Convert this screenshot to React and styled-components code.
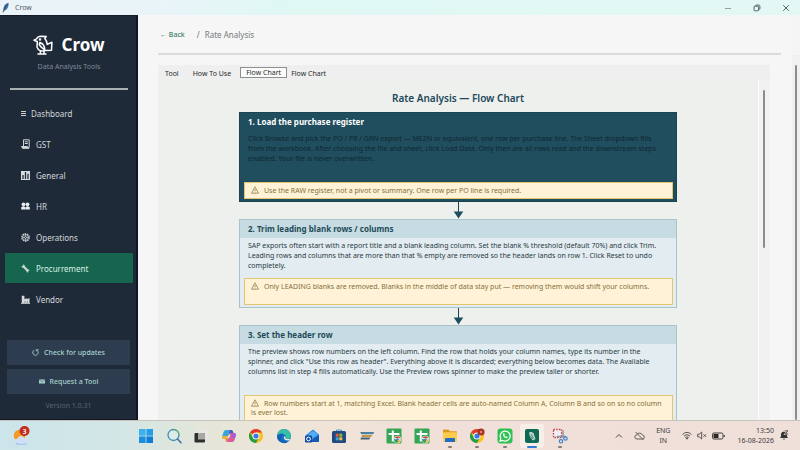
import React from 'react';
import styled, { createGlobalStyle, css } from 'styled-components';

const GlobalStyle = createGlobalStyle`
    * {
        box-sizing: border-box;
    }

    body {
        margin: 0;
        background: #f5f5f5;
        font-family: 'Noto Sans', 'Open Sans', sans-serif;
    }

    button {
        font-family: inherit;
        border: none;
        cursor: pointer;
    }

    svg {
        display: block;
        flex-shrink: 0;
    }
`;

const Desktop = styled.div`
    display: grid;
    grid-template-rows: auto minmax(0, 1fr) auto;
    height: 100vh;
    overflow: hidden;
`;

/* ---------- title bar ---------- */

const TitleBar = styled.header`
    display: flex;
    align-items: center;
    justify-content: space-between;
    height: 15px;
    padding: 0 9px 0 2px;
    background: linear-gradient(90deg, #eaf4f8 0%, #e9f4f8 20%, #dff8f4 36%, #e3f8f5 100%);
`;

const WindowTitle = styled.div`
    display: flex;
    align-items: center;
    gap: 5px;
    font-size: 7px;
    color: #4e5a60;
`;

const WindowControls = styled.div`
    display: flex;
    gap: 19px;
`;

const WindowButton = styled.button`
    display: flex;
    align-items: center;
    justify-content: center;
    width: 10px;
    height: 14px;
    padding: 0;
    background: transparent;
    color: #45545a;
`;

/* ---------- sidebar ---------- */

const Workspace = styled.div`
    display: grid;
    grid-template-columns: 138px minmax(0, 1fr) auto;
    min-height: 0;
`;

const Sidebar = styled.aside`
    display: flex;
    flex-direction: column;
    background: #1f2a38;
    border-top: 1px solid #131c28;
    border-right: 2px solid #101626;
    border-bottom: 1px solid #101626;
`;

const Brand = styled.div`
    display: flex;
    flex-direction: column;
    align-items: center;
    margin: 0 8px 0 10px;
    padding-top: 17px;
    border-bottom: 2px solid #a9b2b2;
    height: 74px;
`;

const BrandName = styled.div`
    display: flex;
    align-items: center;
    gap: 8px;
    font-size: 17px;
    line-height: 24px;
    font-weight: 700;
    color: #ffffff;
`;

const BrandTagline = styled.div`
    margin-top: 5px;
    font-size: 7px;
    line-height: 10px;
    color: #7d8b99;
`;

const Nav = styled.nav`
    display: flex;
    flex-direction: column;
    gap: 1px;
    padding: 8px 3px 0 5px;
`;

const NavItem = styled.a`
    display: flex;
    align-items: center;
    gap: ${({ $compact }) => ($compact ? 4 : 6)}px;
    height: 30px;
    padding-left: ${({ $compact }) => ($compact ? 15 : 16)}px;
    font-size: 8px;
    text-decoration: none;
    color: ${({ $active }) => ($active ? '#d9efe5' : '#d2d8dc')};
    background: ${({ $active }) => ($active ? '#16654e' : 'transparent')};
`;

const SidebarFooter = styled.div`
    display: flex;
    flex-direction: column;
    gap: 4px;
    margin-top: auto;
    padding: 0 6px 8px 7px;
`;

const SidebarButton = styled.button`
    display: flex;
    align-items: center;
    justify-content: center;
    gap: 5px;
    height: 25px;
    padding: 0;
    font-size: 7px;
    font-weight: 500;
    color: #a8d4cf;
    background: #2d3c4e;
`;

const Version = styled.div`
    margin-top: 3px;
    font-size: 7px;
    line-height: 10px;
    text-align: center;
    color: #586472;
`;

/* ---------- main area ---------- */

const Main = styled.main`
    display: flex;
    flex-direction: column;
    min-height: 0;
    padding: 13px 11px 0 20px;
    background: #f6f6f6;
`;

const Breadcrumb = styled.div`
    display: flex;
    align-items: center;
    height: 12px;
    padding-left: 2px;
    gap: 12px;
    font-size: 8px;
    color: #75797b;
`;

const BackLink = styled.a`
    font-size: 7px;
    font-weight: 500;
    text-decoration: none;
    color: #3c8169;
`;

const Crumb = styled.span`
    display: flex;
    gap: 5px;
`;

const Rule = styled.hr`
    width: 100%;
    height: 2px;
    margin: 13px 0 10px;
    border: none;
    background: #dadbdb;
    flex-shrink: 0;
`;

const Notebook = styled.section`
    display: flex;
    flex-direction: column;
    flex: 1;
    min-height: 0;
    margin-right: 11px;
    background: #efefef;
`;

const TabList = styled.div`
    display: flex;
    align-items: center;
    height: 14px;
    padding-left: 7px;
`;

const Tab = styled.button`
    height: 11px;
    margin-top: 3px;
    padding: 0;
    margin-right: ${({ $gap }) => $gap || 0}px;
    font-size: 7px;
    line-height: 10px;
    color: #262a2c;
    background: transparent;

    ${({ $active }) =>
        $active &&
        css`
            margin-top: 0;
            margin-right: 4px;
            padding: 0 5px;
            line-height: 9px;
            background: #fbfbfb;
            border: 1px solid #8b8f90;
        `}
`;

const TabPanel = styled.div`
    display: flex;
    flex: 1;
    min-height: 0;
`;

const Canvas = styled.div`
    display: flex;
    flex-direction: column;
    align-items: center;
    flex: 1;
    min-width: 0;
    overflow: hidden;
    border-right: 1px solid #fcfcfa;
    background: #edf0ed;
`;

const ScrollTrack = styled.div`
    display: flex;
    flex-direction: column;
    width: ${({ $outer }) => ($outer ? 8 : 11)}px;
    margin-top: ${({ $outer }) => ($outer ? 40 : 0)}px;
    padding: ${({ $outer }) => ($outer ? '10px 3px 0' : '11px 5px 0 4px')};
    background: ${({ $outer }) => ($outer ? '#f0f0f0' : '#f1f1f1')};
`;

const ScrollThumb = styled.div`
    width: 2px;
    height: ${({ $size }) => $size};
    border-radius: 1px;
    background: #8c8c8c;
`;

/* ---------- flow chart ---------- */

const ChartTitle = styled.h1`
    margin: 12px 0 7px;
    font-size: 10px;
    line-height: 14px;
    font-weight: 600;
    color: #21485a;
`;

const Step = styled.article`
    display: flex;
    flex-direction: column;
    flex-shrink: 0;
    width: 73%;
    padding-bottom: 2px;
    border: 1px solid ${({ $active }) => ($active ? '#1b4453' : '#a9c3ca')};
    background: ${({ $active }) => ($active ? '#204e5e' : '#e2ecf1')};
`;

const StepTitle = styled.h2`
    margin: 0;
    padding: 0 8px;
    font-size: 8px;
    line-height: 18px;
    font-weight: 700;
    color: ${({ $active }) => ($active ? '#ffffff' : '#1f4a59')};
    background: ${({ $active }) => ($active ? 'transparent' : '#c6dce2')};
`;

const StepText = styled.p`
    margin: 0;
    min-height: ${({ $roomy }) => ($roomy ? 51 : 40)}px;
    padding: 3px 8px 0;
    font-size: 7px;
    line-height: 10px;
    white-space: pre-line;
    color: ${({ $active }) => ($active ? '#0f2731' : '#2a3b43')};
`;

const Warning = styled.div`
    min-height: ${({ $short }) => ($short ? 17 : 27)}px;
    margin: 0 3px 0 4px;
    padding: 3px 6px 0;
    font-size: 7px;
    line-height: 9px;
    white-space: pre-line;
    color: #84713a;
    border: 1px solid #e2c672;
    background: #fff2d6;

    svg {
        display: inline-block;
        margin-right: 5px;
        vertical-align: -1px;
    }
`;

const Connector = styled.div`
    display: flex;
    justify-content: center;
    flex-shrink: 0;
    height: 17px;
`;

/* ---------- taskbar ---------- */

const Taskbar = styled.footer`
    display: grid;
    grid-template-columns: 138px 430px minmax(0, 1fr);
    align-items: center;
    height: 30px;
    border-top: 1px solid #c9c3be;
    background: linear-gradient(90deg, #cbe5ea 0%, #d3e6e6 15%, #e6e6d8 27%, #f0e4d8 40%, #f1dfd9 60%, #f0e0da 100%);
`;

const WeatherButton = styled.button`
    justify-self: start;
    margin-left: 12px;
    padding: 0;
    background: transparent;
`;

const PinnedApps = styled.div`
    display: flex;
    justify-content: space-between;
`;

const AppButton = styled.button`
    display: flex;
    flex-direction: column;
    align-items: center;
    width: 16px;
    height: 24px;
    padding: 4px 0 0;
    background: transparent;

    ${({ $focused }) =>
        $focused &&
        css`
            width: 24px;
            margin: 0 -4px;
            border-radius: 3px;
            background: #f8eee8;
        `}

    &::after {
        content: '';
        width: ${({ $focused }) => ($focused ? 10 : 4)}px;
        height: ${({ $running, $focused }) => ($running || $focused ? 2 : 0)}px;
        margin-top: 2px;
        border-radius: 1px;
        background: ${({ $focused }) => ($focused ? '#2b7cd3' : '#857d7a')};
    }
`;

const Tray = styled.div`
    display: flex;
    align-items: center;
    justify-content: flex-end;
    gap: 5px;
    padding-right: 11px;
    font-size: 7px;
    line-height: 10px;
    color: #3f3d3d;
`;

const TrayGroup = styled.div`
    display: flex;
    align-items: center;
    gap: ${({ $gap }) => $gap || 5}px;
    margin-right: 7px;
`;

const Language = styled.div`
    text-align: center;
`;

const Clock = styled.time`
    text-align: right;
`;

/* ---------- icons ---------- */

const CrowLogo = () => (
    <svg width="20" height="20" viewBox="0 0 20 20" fill="none" stroke="#fff" strokeWidth="1.5" strokeLinejoin="round" strokeLinecap="round">
        <path d="M1 5.200 3.500 3.800C4.500 2 6 1.200 8 1.200L13.200 1.500 11.800 3.500C13.300 5 14 7 14.200 9.400L18.900 7.200 18.500 15.200 11.500 15.600C8.500 16.500 5.200 15.500 4.200 12.500 3.600 10.500 4.600 9.200 4.200 6.500Z" />
        <path d="M6.800 7.500C10 8.500 11.600 11 11.800 14.800L8.200 12.200 6.300 9.500Z" />
        <path d="M7.400 16v2.300M11 16v2.300M5 18.900h4M10 18.900h3" />
        <circle cx="7" cy="4.600" r=".5" fill="#fff" />
    </svg>
);

const FeatherIcon = () => (
    <svg width="8" height="11" viewBox="0 0 8 11">
        <path d="M1.500 8.500C1 5.500 2.500 1.500 6.500.7 7 4 5.500 7.500 2.500 8.600Z" fill="#3f76a8" />
        <path d="M1 10.500C2 7 3.500 4 5.500 2" stroke="#23364a" strokeWidth=".8" fill="none" />
    </svg>
);

const MenuIcon = () => (
    <svg width="7" height="7" viewBox="0 0 7 7" stroke="#c9d0d6" strokeWidth="1">
        <path d="M1 1.500h5M1 3.500h5M1 5.500h5" />
    </svg>
);

const ReceiptIcon = () => (
    <svg width="9" height="10" viewBox="0 0 9 10" fill="none" stroke="#cfd6da" strokeWidth="1">
        <path d="M2.500 7V.8h5.700v7.700M3.800 2.800h3M3.800 4.500h3" />
        <path d="M.5 7.500h6v1.200H8V9.300H1.500Z" fill="#cfd6da" />
    </svg>
);

const ChartIcon = () => (
    <svg width="9" height="9" viewBox="0 0 9 9">
        <rect width="9" height="9" fill="#d7dde0" />
        <path d="M2 8V4M4.500 8V1M7 8V2.800" stroke="#1f2a38" strokeWidth="1.300" />
    </svg>
);

const PeopleIcon = () => (
    <svg width="9" height="8" viewBox="0 0 9 8" fill="#e9edef">
        <circle cx="2.500" cy="2.300" r="1.900" />
        <circle cx="6.500" cy="2.300" r="1.900" />
        <path d="M.2 7.500V5.200Q2.500 3.400 4.400 5.200V7.500ZM4.600 7.500V5.200Q6.500 3.400 8.800 5.200V7.500Z" />
    </svg>
);

const GearIcon = () => (
    <svg width="9" height="9" viewBox="0 0 9 9" fill="none" stroke="#ccd3d8">
        <circle cx="4.500" cy="4.500" r="3.700" strokeWidth="1.200" strokeDasharray="1.600 .7" />
        <circle cx="4.500" cy="4.500" r="2.900" strokeWidth=".8" />
        <circle cx="4.500" cy="4.500" r="1" strokeWidth=".9" />
        <path d="M4.500 1.500v2M4.500 5.500v2M1.500 4.500h2M5.500 4.500h2" strokeWidth=".7" />
    </svg>
);

const WrenchIcon = () => (
    <svg width="9" height="9" viewBox="0 0 9 9">
        <path d="M2 2 7 7" stroke="#c3d6cd" strokeWidth="2.400" />
        <path d="M.3 2.200 1.300 3.700 3.500 3.300 3.600 1.300 2.200.3 2 1.800ZM8.700 6.700 7.400 5.600 5.600 6 5.600 7.900 7 8.800 7.200 7.200Z" fill="#c3d6cd" />
    </svg>
);

const FactoryIcon = () => (
    <svg width="9" height="9" viewBox="0 0 9 9">
        <path d="M.8 8V.8H3.400V4.200L5.600 3V4.200L8.500 3V8Z" fill="#d5dadd" />
        <path d="M4 8V6.200M6.300 8V6.200" stroke="#6f7984" strokeWidth=".9" />
        <path d="M0 8.300h9" stroke="#d5dadd" />
    </svg>
);

const RefreshIcon = () => (
    <svg width="7" height="7" viewBox="0 0 7 7" fill="none" stroke="#a8cccb" strokeWidth=".9">
        <path d="M2.300 1.100A2.700 2.700 0 1 0 5 1.300M4.300 2.300V.7H6.600" />
    </svg>
);

const MailIcon = () => (
    <svg width="6" height="5" viewBox="0 0 6 5">
        <path d="M0 .5h6v4H0Z" fill="#a5cfca" />
        <path d="M0 .8 3 2.800 6 .8" fill="none" stroke="#4a6870" strokeWidth=".6" />
    </svg>
);

const WarningIcon = () => (
    <svg width="8" height="8" viewBox="0 0 8 8" fill="none" stroke="#84713a" strokeWidth=".7" strokeLinejoin="round">
        <path d="M4 .8 7.500 7.200H.5Z" />
        <path d="M4 3v2M4 5.700v.8" />
    </svg>
);

const ArrowDown = () => (
    <svg width="11" height="17" viewBox="0 0 11 17">
        <path d="M5.500 0v10" stroke="#1d4452" strokeWidth="1" />
        <path d="M.7 9.500h9.600L5.500 16.500Z" fill="#1b4f5e" />
    </svg>
);

const MinimizeIcon = () => (
    <svg width="8" height="8" viewBox="0 0 8 8" stroke="#8fa0a3" strokeWidth="1">
        <path d="M1 4.500h6" />
    </svg>
);

const RestoreIcon = () => (
    <svg width="8" height="8" viewBox="0 0 8 8" fill="none" stroke="currentColor" strokeWidth=".9">
        <rect x="1" y="2.200" width="4.600" height="4.600" rx=".8" />
        <path d="M2.600 1.900Q2.600 1 3.600 1H5.600Q6.900 1 6.900 2.300V4.500Q6.900 5.400 6 5.400" />
    </svg>
);

const CloseIcon = () => (
    <svg width="8" height="8" viewBox="0 0 8 8" stroke="currentColor" strokeWidth=".9">
        <path d="M1.200 1.200 6.800 6.800M6.800 1.200 1.200 6.800" />
    </svg>
);

const WeatherIcon = () => (
    <svg width="18" height="20" viewBox="0 0 18 20">
        <circle cx="7.500" cy="9.500" r="5.700" fill="#f59a22" />
        <path d="M5.500 18.500a2.900 2.900 0 0 1-.2-5.800 3.800 3.800 0 0 1 7-.6 3.200 3.200 0 0 1 .7 6.400Z" fill="#cfdff8" />
        <path d="M3.500 17.300q6 1.500 11.500 0-1 1.200-2.500 1.200H5.500q-1.300 0-2-1.200Z" fill="#86aee8" />
        <circle cx="12.500" cy="5" r="5" fill="#c42b1c" />
        <text x="12.500" y="7.600" textAnchor="middle" fontSize="7" fontWeight="600" fill="#fff">3</text>
    </svg>
);

const WindowsIcon = () => (
    <svg width="16" height="16" viewBox="0 0 16 16">
        <path d="M1 1h6.700v6.700H1Z" fill="#3fb0ee" />
        <path d="M8.400 1H15v6.700H8.400Z" fill="#259ee8" />
        <path d="M1 8.400h6.700V15H1Z" fill="#1c8ee0" />
        <path d="M8.400 8.400H15V15H8.400Z" fill="#0f7cd6" />
    </svg>
);

const SearchIcon = () => (
    <svg width="16" height="16" viewBox="0 0 16 16" fill="none">
        <circle cx="7.500" cy="7" r="5.500" fill="#dcebe8" stroke="#3f8fb5" strokeWidth="1.300" />
        <path d="M7.500 1.500A5.500 5.500 0 0 1 13 7" stroke="#6cae7c" strokeWidth="1.300" />
        <path d="M11.500 11 15 14.700" stroke="#3b6ea5" strokeWidth="1.500" strokeLinecap="round" />
    </svg>
);

const TaskViewIcon = () => (
    <svg width="16" height="16" viewBox="0 0 16 16">
        <rect x="5" y="1.500" width="10" height="10" rx="1" fill="#e9e7e4" />
        <rect x="1.500" y="5" width="10.500" height="9.500" rx="1" fill="#2f2e2e" />
        <path d="M5 5h7v6.500H5Z" fill="#a9a7a4" />
    </svg>
);

const CopilotIcon = () => (
    <svg width="16" height="16" viewBox="0 0 16 16">
        <path d="M5 2h5L7 11H3Q.5 11 1.300 8L2.500 4Q3 2 5 2Z" fill="#3aa6d8" />
        <path d="M1.300 8Q.5 11 3 11H7L8 8Z" fill="#e8b43a" />
        <path d="M11 14H6L9 5h4Q15.500 5 14.700 8L13.500 12Q13 14 11 14Z" fill="#d95a9d" />
        <path d="M9 2h1.500Q12 2 12.500 5H9L7.500 8Z" fill="#4856c9" />
        <path d="M6 14q-1 0-1.500-2L4.300 11H7Z" fill="#f0703a" />
        <path d="M13 5q2.500 0 1.700 3l-.6 2H10.500L12 5Z" fill="#a160d6" />
        <path d="M8.600 6.500 7.300 10" stroke="#fbeee8" strokeWidth="1.400" />
    </svg>
);

const ChromeIcon = ({ $badge }) => (
    <svg width="16" height="16" viewBox="0 0 16 16">
        <circle cx="8" cy="8" r="7" fill="#fbc116" />
        <path d="M8 8 1.900 4.500A7 7 0 0 1 14.100 4.500H8Z" fill="#e33b2e" />
        <path d="M1.900 4.500A7 7 0 0 0 8 15L11 9.800 5 9.700Z" fill="#269c4b" />
        <circle cx="8" cy="8" r="3.500" fill="#fff" />
        <circle cx="8" cy="8" r="2.600" fill="#3b78e7" />
        {$badge && <circle cx="12" cy="4" r="3.600" fill="#a93226" />}
        {$badge && <circle cx="12" cy="4" r="1.200" fill="#d9867c" />}
    </svg>
);

const EdgeIcon = () => (
    <svg width="16" height="16" viewBox="0 0 16 16">
        <circle cx="8" cy="8" r="7" fill="#1671c4" />
        <path d="M1 8A7 7 0 0 1 15 8q0 3-3.500 3-2.500 0-2-1.500Q10.500 7.500 8 6.200 4 5 1 8Z" fill="#36bfa6" />
        <path d="M1 8q3-3.500 6.500-2Q4.500 8 6 12 8 14.500 12.500 13.400A7 7 0 0 1 1 8Z" fill="#1460b4" />
        <path d="M8.500 8.300q1.300.3 1 1.200-.5 1.500 2 1.500h2.700q-.8 1.300-2 1.500-3.200.2-4.200-1.800-.5-1.500.5-2.400Z" fill="#f3e6df" />
    </svg>
);

const OutlookIcon = () => (
    <svg width="16" height="16" viewBox="0 0 16 16">
        <path d="M2 7 9 1.500 15 6.500V13q0 1-1 1H4Z" fill="#2c8ae8" />
        <path d="M4 6.500 9 3l5 3.500-5 3Z" fill="#58aef2" />
        <path d="M5 14 15 7v6q0 1-1 1Z" fill="#1559b8" />
        <rect x="1" y="7.500" width="7" height="7" rx="1" fill="#1148a0" />
        <circle cx="4.500" cy="11" r="1.900" fill="none" stroke="#fff" strokeWidth="1" />
    </svg>
);

const StoreIcon = () => (
    <svg width="16" height="16" viewBox="0 0 16 16">
        <path d="M5.500 4V2h5v2" fill="none" stroke="#4a96d8" strokeWidth="1" />
        <rect x="1" y="3" width="14" height="12" rx="1.500" fill="#204a80" />
        <path d="M4.700 5.700h3v3h-3Z" fill="#ef5a35" />
        <path d="M8.300 5.700h3v3h-3Z" fill="#82ba3c" />
        <path d="M4.700 9.300h3v3h-3Z" fill="#35a5ea" />
        <path d="M8.300 9.300h3v3h-3Z" fill="#fbc02d" />
    </svg>
);

const StripesIcon = () => (
    <svg width="16" height="16" viewBox="0 0 16 16">
        <path d="M1 4h14.300L14 6.300H2.500Z" fill="#4f7fa5" />
        <path d="M3 6.900h10.500L12 9H2.500Z" fill="#c79a4a" />
        <path d="M2 9.600h9.500L10 11.500H1.500Z" fill="#456078" />
    </svg>
);

const SheetIcon = () => (
    <svg width="16" height="16" viewBox="0 0 16 16">
        <rect x=".5" y=".5" width="15" height="15" rx="1" fill="#35a556" />
        <path d="M6.800 2.500v11M2.500 6h11" stroke="#fff" strokeWidth="2" />
        <circle cx="11.500" cy="11.500" r="3.700" fill="#e8ece4" />
        <path d="M8.500 10a3.500 3.500 0 0 1 6 0Z" fill="#d94436" />
        <path d="M8.300 10.500a3.500 3.500 0 0 0 3 4.500l1-2Z" fill="#2f9950" />
        <path d="M14.700 10.500a3.500 3.500 0 0 1-3 4.500l1.300-3Z" fill="#efbb29" />
        <circle cx="11.500" cy="11.500" r="1.300" fill="#4a7fd6" />
    </svg>
);

const FolderIcon = () => (
    <svg width="16" height="16" viewBox="0 0 16 16">
        <path d="M1 2.500Q1 1.500 2 1.500h4.500L8 3.200H14q1 0 1 1V9H1Z" fill="#dd9a1a" />
        <rect x="1" y="4.300" width="14" height="9.700" rx="1" fill="#fbcb4b" />
        <path d="M3 14V11q0-1 1-1h8q1 0 1 1v3Z" fill="#1e6fc4" />
    </svg>
);

const WhatsAppIcon = () => (
    <svg width="16" height="16" viewBox="0 0 16 16">
        <rect x=".5" y=".5" width="15" height="15" rx="3" fill="#30c154" />
        <path d="M3 13.200 3.800 10.500A5 5 0 1 1 5.700 12.400Z" fill="none" stroke="#fff" strokeWidth="1.200" />
        <path d="M6 5.500Q5.500 7.500 7 9q1.500 1.500 3.300 1.100l.4-1.200-1.300-.7-.7.600Q7.800 8.300 7.300 7.400l.5-.7-.6-1.400Z" fill="#fff" />
    </svg>
);

const CrowAppIcon = () => (
    <svg width="16" height="16" viewBox="0 0 16 16">
        <rect x="1" y="1" width="14" height="14" rx="2" fill="#0f6a55" />
        <path d="M5 4.500 7 3.700 9.500 5 11.500 11 9 12.500 6 9Z" fill="#c2d6c9" />
        <path d="M7 6 9.800 10.500M6.500 8 8.500 11" stroke="#2e7c66" strokeWidth=".8" />
    </svg>
);

const SnipIcon = () => (
    <svg width="16" height="16" viewBox="0 0 16 16" fill="none">
        <rect x="1.500" y="1.500" width="8" height="8" fill="#f2eff4" stroke="#c83a43" strokeWidth="1.300" strokeDasharray="1.500 1.200" />
        <path d="M11 2.500V10M4.500 8.500H14" stroke="#8296ac" strokeWidth="1.500" />
        <circle cx="13.500" cy="10.500" r="1.700" stroke="#3b85cc" strokeWidth="1.200" />
        <circle cx="9" cy="13.300" r="1.700" stroke="#3b85cc" strokeWidth="1.200" />
    </svg>
);

const ChevronUpIcon = () => (
    <svg width="8" height="8" viewBox="0 0 8 8" fill="none" stroke="#4b4744" strokeWidth="1">
        <path d="M1 5.500 4 2.500 7 5.500" />
    </svg>
);

const CloudOffIcon = () => (
    <svg width="11" height="10" viewBox="0 0 11 10" fill="none" stroke="#57504d" strokeWidth=".9">
        <path d="M3 8A2 2 0 0 1 2.700 4 3 3 0 0 1 8.300 4 2 2 0 0 1 8.300 8ZM1.500 1 9.500 9" />
    </svg>
);

const WifiIcon = () => (
    <svg width="10" height="9" viewBox="0 0 10 9" fill="none" stroke="#4b4744" strokeWidth=".9">
        <path d="M.5 3.500Q5-.8 9.500 3.500M2 5Q5 2.200 8 5M3.400 6.500Q5 5 6.600 6.500" />
        <circle cx="5" cy="7.500" r=".6" fill="#4b4744" />
    </svg>
);

const MuteIcon = () => (
    <svg width="10" height="9" viewBox="0 0 10 9" fill="none" stroke="#4b4744" strokeWidth=".9">
        <path d="M.7 3.200H2.300L4.700 1V8L2.300 5.800H.7ZM6.500 3.300 9 5.800M9 3.300 6.500 5.800" />
    </svg>
);

const BatteryIcon = () => (
    <svg width="13" height="8" viewBox="0 0 13 8">
        <rect x=".5" y="1" width="10.500" height="6" rx="1.500" fill="none" stroke="#3f3b39" />
        <rect x="1.500" y="2" width="5" height="4" fill="#2b2827" />
        <path d="M12.300 3v2" stroke="#3f3b39" />
    </svg>
);

const BellIcon = () => (
    <svg width="10" height="11" viewBox="0 0 10 11">
        <path d="M1 8 2 6.500V4Q2.300 1.500 5 1.500 7.700 1.500 8 4V6.500L9 8ZM3.700 8.700H6.300Q5 10.500 3.700 8.700Z" fill="#333" />
        <path d="M5.500 1h3L6 4h3" fill="none" stroke="#f0e0da" strokeWidth="1.400" />
        <path d="M5.800.8h3L6.300 4h2.900" fill="none" stroke="#333" strokeWidth=".8" />
    </svg>
);

/* ---------- data ---------- */

const navItems = [
    { label: 'Dashboard', icon: <MenuIcon />, compact: true },
    { label: 'GST', icon: <ReceiptIcon /> },
    { label: 'General', icon: <ChartIcon /> },
    { label: 'HR', icon: <PeopleIcon /> },
    { label: 'Operations', icon: <GearIcon /> },
    { label: 'Procurrement', icon: <WrenchIcon />, active: true },
    { label: 'Vendor', icon: <FactoryIcon /> }
];

const steps = [
    {
        title: '1. Load the purchase register',
        text: `Click Browse and pick the PO / PR / GRN export — ME2N or equivalent, one row per purchase line. The Sheet dropdown fills
            from the workbook. After choosing the file and sheet, click Load Data. Only then are all rows read and the downstream steps
            enabled. Your file is never overwritten.`,
        warning: 'Use the RAW register, not a pivot or summary. One row per PO line is required.',
        active: true,
        roomy: true
    },
    {
        title: '2. Trim leading blank rows / columns',
        text: `SAP exports often start with a report title and a blank leading column. Set the blank % threshold (default 70%) and click Trim.
            Leading rows and columns that are more than that % empty are removed so the header lands on row 1. Click Reset to undo
            completely.`,
        warning: 'Only LEADING blanks are removed. Blanks in the middle of data stay put — removing them would shift your columns.'
    },
    {
        title: '3. Set the header row',
        text: `The preview shows row numbers on the left column. Find the row that holds your column names, type its number in the
            spinner, and click "Use this row as header". Everything above it is discarded; everything below becomes data. The Available
            columns list in step 4 fills automatically. Use the Preview rows spinner to make the preview taller or shorter.`,
        warning: `Row numbers start at 1, matching Excel. Blank header cells are auto-named Column A, Column B and so on so no column
            is ever lost.`,
        roomy: true
    }
];

const pinnedApps = [
    { name: 'Start', icon: <WindowsIcon /> },
    { name: 'Search', icon: <SearchIcon /> },
    { name: 'Task view', icon: <TaskViewIcon /> },
    { name: 'Copilot', icon: <CopilotIcon /> },
    { name: 'Chrome', icon: <ChromeIcon /> },
    { name: 'Edge', icon: <EdgeIcon /> },
    { name: 'Outlook', icon: <OutlookIcon /> },
    { name: 'Store', icon: <StoreIcon /> },
    { name: 'SAP', icon: <StripesIcon /> },
    { name: 'Sheets', icon: <SheetIcon /> },
    { name: 'Sheets 2', icon: <SheetIcon /> },
    { name: 'File Explorer', icon: <FolderIcon />, running: true },
    { name: 'Chrome profile', icon: <ChromeIcon $badge />, running: true },
    { name: 'WhatsApp', icon: <WhatsAppIcon />, running: true },
    { name: 'Crow', icon: <CrowAppIcon />, focused: true },
    { name: 'Snipping Tool', icon: <SnipIcon />, running: true }
];

const FlowChart = () => (
    <Canvas>
        <ChartTitle>Rate Analysis — Flow Chart</ChartTitle>
        {steps.map((step, index) => (
            <React.Fragment key={step.title}>
                {index > 0 && (
                    <Connector>
                        <ArrowDown />
                    </Connector>
                )}
                <Step $active={step.active}>
                    <StepTitle $active={step.active}>{step.title}</StepTitle>
                    <StepText $active={step.active} $roomy={step.roomy}>{step.text}</StepText>
                    <Warning $short={step.active}>
                        <WarningIcon />
                        {step.warning}
                    </Warning>
                </Step>
            </React.Fragment>
        ))}
    </Canvas>
);

const App = () => {
    return (
        <Desktop>
            <GlobalStyle />
            <TitleBar>
                <WindowTitle>
                    <FeatherIcon />
                    Crow
                </WindowTitle>
                <WindowControls>
                    <WindowButton aria-label="Minimize"><MinimizeIcon /></WindowButton>
                    <WindowButton aria-label="Restore"><RestoreIcon /></WindowButton>
                    <WindowButton aria-label="Close"><CloseIcon /></WindowButton>
                </WindowControls>
            </TitleBar>

            <Workspace>
                <Sidebar>
                    <Brand>
                        <BrandName>
                            <CrowLogo />
                            Crow
                        </BrandName>
                        <BrandTagline>Data Analysis Tools</BrandTagline>
                    </Brand>
                    <Nav>
                        {navItems.map((item) => (
                            <NavItem key={item.label} href="#" $active={item.active} $compact={item.compact}>
                                {item.icon}
                                {item.label}
                            </NavItem>
                        ))}
                    </Nav>
                    <SidebarFooter>
                        <SidebarButton><RefreshIcon />Check for updates</SidebarButton>
                        <SidebarButton><MailIcon />Request a Tool</SidebarButton>
                        <Version>Version 1.0.31</Version>
                    </SidebarFooter>
                </Sidebar>

                <Main>
                    <Breadcrumb>
                        <BackLink href="#">← Back</BackLink>
                        <Crumb>
                            <span>/</span>
                            <span>Rate Analysis</span>
                        </Crumb>
                    </Breadcrumb>
                    <Rule />
                    <Notebook>
                        <TabList role="tablist">
                            <Tab role="tab" $gap={14}>Tool</Tab>
                            <Tab role="tab" $gap={9}>How To Use</Tab>
                            <Tab role="tab" aria-selected="true" $active>Flow Chart</Tab>
                            <Tab role="tab">Flow Chart</Tab>
                        </TabList>
                        <TabPanel>
                            <FlowChart />
                            <ScrollTrack>
                                <ScrollThumb $size="48%" />
                            </ScrollTrack>
                        </TabPanel>
                    </Notebook>
                </Main>

                <ScrollTrack $outer>
                    <ScrollThumb $size="100%" />
                </ScrollTrack>
            </Workspace>

            <Taskbar>
                <WeatherButton aria-label="Weather"><WeatherIcon /></WeatherButton>
                <PinnedApps>
                    {pinnedApps.map((app) => (
                        <AppButton key={app.name} aria-label={app.name} $running={app.running} $focused={app.focused}>
                            {app.icon}
                        </AppButton>
                    ))}
                </PinnedApps>
                <Tray>
                    <TrayGroup $gap={11}>
                        <ChevronUpIcon />
                        <CloudOffIcon />
                        <Language>ENG<br />IN</Language>
                    </TrayGroup>
                    <TrayGroup>
                        <WifiIcon />
                        <MuteIcon />
                        <BatteryIcon />
                    </TrayGroup>
                    <Clock dateTime="2026-08-16T13:50">13:50<br />16-08-2026</Clock>
                    <BellIcon />
                </Tray>
            </Taskbar>
        </Desktop>
    );
};

export default App;
